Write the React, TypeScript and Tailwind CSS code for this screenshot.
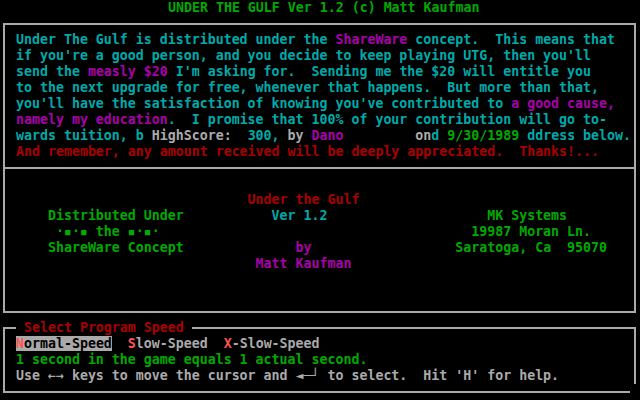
type Seg = [string, string];

const C = {
  cy: "text-[#00aaaa]",
  mg: "text-[#aa00aa]",
  rd: "text-[#aa0000]",
  gr: "text-[#00aa00]",
  gy: "text-[#aaaaaa]",
  hi: "text-[#ff5555]",
  bk: "text-black",
};

function Line({ segs }: { segs: Seg[] }) {
  return (
    <div className="h-4 leading-4 whitespace-pre">
      {segs.map(([c, t], i) => (
        <span key={i} className={c}>
          {t}
        </span>
      ))}
    </div>
  );
}

const notice: Seg[][] = [
  [
    [C.cy, "Under The Gulf is distributed under the "],
    [C.mg, "ShareWare"],
    [C.cy, " concept.  This means that"],
  ],
  [[C.cy, "if you're a good person, and you decide to keep playing UTG, then you'll"]],
  [
    [C.cy, "send the "],
    [C.mg, "measly $20"],
    [C.cy, " I'm asking for.  Sending me the $20 will entitle you"],
  ],
  [[C.cy, "to the next upgrade for free, whenever that happens.  But more than that,"]],
  [
    [C.cy, "you'll have the satisfaction of knowing you've contributed to "],
    [C.mg, "a good cause,"],
  ],
  [
    [C.mg, "namely my education"],
    [C.cy, ".  I promise that 100% of your contribution will go to-"],
  ],
  [
    [C.cy, "wards tuition, b"],
    [C.gy, " HighScore:  "],
    [C.cy, "300,"],
    [C.gy, " by "],
    [C.mg, "Dano"],
    [C.gy, "         on"],
    [C.cy, "d "],
    [C.gr, "9/30/1989"],
    [C.cy, " ddress below."],
  ],
  [[C.rd, "And remember, any amount received will be deeply appreciated.  Thanks!..."]],
];

const credits: Seg[][] = [
  [[C.rd, " ".repeat(29) + "Under the Gulf"]],
  [
    [C.gr, "    Distributed Under"],
    [C.cy, " ".repeat(11) + "Ver 1.2"],
    [C.gr, " ".repeat(20) + "MK Systems"],
  ],
  [
    [C.gr, "     ·▪·▪ the ▪·▪·"],
    [C.gr, " ".repeat(39) + "19987 Moran Ln."],
  ],
  [
    [C.gr, "    ShareWare Concept"],
    [C.mg, " ".repeat(14) + "by"],
    [C.gr, " ".repeat(18) + "Saratoga, Ca  95070"],
  ],
  [[C.mg, " ".repeat(30) + "Matt Kaufman"]],
];

export default function App() {
  return (
    <div
      className="w-[640px] h-[400px] bg-black overflow-hidden text-[13.28px] font-bold"
      style={{ fontFamily: '"DejaVu Sans Mono", "Liberation Mono", monospace' }}
    >
      {/* title */}
      <div className="h-4 leading-4 whitespace-pre pl-[168px] text-[#00aa00]">
        UNDER THE GULF Ver 1.2 (c) Matt Kaufman
      </div>

      {/* shareware notice + credits */}
      <div className="mt-[7px] ml-[3px] w-[633px] border-2 border-[#aaaaaa]">
        <div className="pt-[7px] pb-[7px] pl-[11px]">
          {notice.map((segs, i) => (
            <Line key={i} segs={segs} />
          ))}
        </div>
        <div className="h-[2px] bg-[#aaaaaa]" />
        <div className="pt-[23px] pb-[39px] pl-[11px]">
          {credits.map((segs, i) => (
            <Line key={i} segs={segs} />
          ))}
        </div>
      </div>

      {/* speed select */}
      <div className="relative mt-[14px] ml-[3px] w-[633px] border-2 border-[#aaaaaa] pt-[7px] pb-[7px] pl-[11px]">
        <span className="absolute left-[11px] -top-[9px] h-4 leading-4 whitespace-pre bg-black text-[#aa0000]">
          {" Select Program Speed "}
        </span>
        <div className="h-4 leading-4 whitespace-pre">
          <span className="bg-[#aaaaaa]">
            <span className={C.hi}>N</span>
            <span className={C.bk}>ormal-Speed</span>
          </span>
          <span className={C.hi}>{"  S"}</span>
          <span className={C.gy}>low-Speed</span>
          <span className={C.hi}>{"  X"}</span>
          <span className={C.gy}>-Slow-Speed</span>
        </div>
        <Line segs={[[C.gr, "1 second in the game equals 1 actual second."]]} />
        <Line
          segs={[[C.gy, "Use ←→ keys to move the cursor and ◄─┘ to select.  Hit 'H' for help."]]}
        />
        <div className="absolute -right-[2px] -bottom-[2px] w-[6px] h-[9px] bg-black" />
      </div>
    </div>
  );
}
